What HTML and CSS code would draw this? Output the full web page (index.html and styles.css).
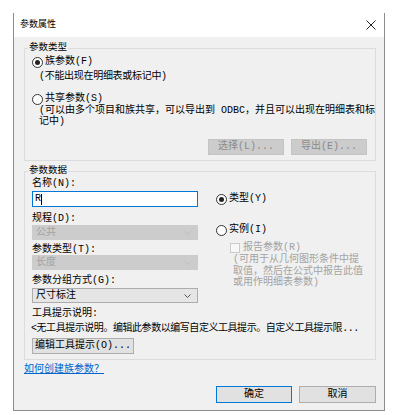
FILE: index.html
```html
<!DOCTYPE html>
<html lang="zh-CN">
<head>
<meta charset="utf-8">
<title>参数属性</title>
<link rel="stylesheet" href="styles.css">
</head>
<body>
<div class="window">
  <div class="titlebar">
    <span class="title">参数属性</span>
    <svg class="close" width="10" height="10" viewBox="0 0 10 10"><path d="M0.5 0.5L9.5 9.5M9.5 0.5L0.5 9.5" stroke="#222" stroke-width="1"/></svg>
  </div>
  <div class="body">
    <fieldset class="group g1">
      <legend>参数类型</legend>
      <div class="radio-row"><span class="radio checked"></span><span>族参数(F)</span></div>
      <div class="desc d1">(不能出现在明细表或标记中)</div>
      <div class="radio-row r2"><span class="radio"></span><span>共享参数(S)</span></div>
      <div class="desc d2"><span class="ln">(可以由多个项目和族共享，可以导出到 ODBC，并且可以出现在明细表和标</span><span class="ln">记中)</span></div>
      <div class="btn-row">
        <div class="btn disabled">选择(L)...</div>
        <div class="btn disabled">导出(E)...</div>
      </div>
    </fieldset>
    <fieldset class="group g2">
      <legend>参数数据</legend>
      <div class="cols">
        <div class="left">
          <div class="lbl">名称(N):</div>
          <div class="input">R<span class="caret"></span></div>
          <div class="lbl l2">规程(D):</div>
          <div class="select disabled"><span>公共</span><svg width="7" height="4" viewBox="0 0 7 4"><path d="M0.5 0.5L3.5 3.5L6.5 0.5" fill="none" stroke="#bdbdbd"/></svg></div>
          <div class="lbl l3">参数类型(T):</div>
          <div class="select disabled s2"><span>长度</span><svg width="7" height="4" viewBox="0 0 7 4"><path d="M0.5 0.5L3.5 3.5L6.5 0.5" fill="none" stroke="#bdbdbd"/></svg></div>
          <div class="lbl l4">参数分组方式(G):</div>
          <div class="select enabled"><span>尺寸标注</span><svg width="7" height="4" viewBox="0 0 7 4"><path d="M0.5 0.5L3.5 3.5L6.5 0.5" fill="none" stroke="#555"/></svg></div>
        </div>
        <div class="right">
          <div class="radio-row rt"><span class="radio checked"></span><span>类型(Y)</span></div>
          <div class="radio-row ri"><span class="radio"></span><span>实例(I)</span></div>
          <div class="check-row"><span class="checkbox"></span><span>报告参数(R)</span></div>
          <div class="hint"><span class="ln">(可用于从几何图形条件中提</span><span class="ln">取值，然后在公式中报告此值</span><span class="ln">或用作明细表参数)</span></div>
        </div>
      </div>
      <div class="lbl l5">工具提示说明:</div>
      <div class="lbl l6 nowrap">&lt;无工具提示说明。编辑此参数以编写自定义工具提示。自定义工具提示限...</div>
      <div class="btn tip">编辑工具提示(O)...</div>
    </fieldset>
    <a class="link" href="#">如何创建族参数？</a>
    <div class="footer">
      <div class="btn primary">确定</div>
      <div class="btn cancel">取消</div>
    </div>
  </div>
</div>
</body>
</html>
```

FILE: styles.css
```css
html, body {
  margin: 0;
  padding: 0;
  background: #ffffff;
}
body {
  font-family: "Liberation Mono", "Noto Sans CJK SC", monospace;
  font-size: 10px;
  color: #000;
}
.window {
  box-sizing: border-box;
  margin: 13px 0 0 13px;
  width: 372px;
  height: 398px;
  border: 1px solid #8c8c8c;
  border-top: none;
  display: flex;
  flex-direction: column;
}
.titlebar {
  height: 24px;
  background: #fff;
  display: flex;
  align-items: center;
  justify-content: space-between;
  padding: 0 8px 0 6px;
}
.title {
  font-size: 9px;
  line-height: 12px;
}
.close {
  display: block;
}
.body {
  flex: 1;
  background: #f0f0f0;
  padding: 4px 8px 0 10px;
  display: flex;
  flex-direction: column;
}
.group {
  margin: 0;
  border: 1px solid #dcdcdc;
  padding: 0 8px 5px 7px;
  min-width: 0;
}
.group legend {
  padding: 0 1px;
  margin-left: -4px;
  line-height: 14px;
  height: 14px;
  font-size: 9.5px;
}
.radio-row {
  display: flex;
  align-items: center;
  height: 14px;
  line-height: 14px;
}
.radio {
  box-sizing: border-box;
  width: 11px;
  height: 11px;
  border: 1px solid #333;
  border-radius: 50%;
  background: #fff;
  margin-right: 2px;
  display: flex;
  align-items: center;
  justify-content: center;
}
.radio.checked::after {
  content: "";
  width: 5px;
  height: 5px;
  border-radius: 50%;
  background: #222;
}
.desc {
  padding-left: 7px;
}
.d1 {
  margin-top: 2px;
  line-height: 12px;
  letter-spacing: -0.3px;
}
.r2 {
  margin-top: 9px;
}
.d2 {
  margin-top: -1px;
  line-height: 11px;
}
.ln {
  display: block;
  white-space: nowrap;
}
.btn-row {
  margin-top: 12px;
  display: flex;
  justify-content: flex-end;
  gap: 7px;
}
.btn {
  box-sizing: border-box;
  height: 16px;
  line-height: 14px;
  border: 1px solid #adadad;
  background: #e1e1e1;
  text-align: center;
  white-space: nowrap;
}
.btn-row .btn {
  width: 76px;
}
.btn.disabled {
  background: #cccccc;
  border-color: #c4c4c4;
  color: #8a8a8a;
}
.g2 {
  margin-top: 3px;
  padding-bottom: 5px;
}
.cols {
  display: flex;
  gap: 18px;
}
.left {
  width: 166px;
  display: flex;
  flex-direction: column;
}
.lbl {
  line-height: 11px;
  height: 11px;
}
.input {
  box-sizing: border-box;
  margin-top: 2px;
  height: 16px;
  border: 1px solid #0078d7;
  background: #fff;
  padding-left: 2px;
  line-height: 14px;
  display: flex;
  align-items: center;
}
.caret {
  display: inline-block;
  width: 1px;
  height: 11px;
  background: #000;
}
.l2 { margin-top: 6px; }
.l3 { margin-top: 4px; }
.l4 { margin-top: 5px; }
.select {
  box-sizing: border-box;
  height: 15px;
  margin-top: 1px;
  display: flex;
  align-items: center;
  justify-content: space-between;
  padding: 0 6px 0 3px;
  line-height: 13px;
}
.select.disabled {
  background: #cccccc;
  border: 1px solid #cccccc;
  color: #a3a3a3;
}
.select.s2 {
  margin-top: 0;
}
.select.enabled {
  margin-top: 2px;
  background: #e5e5e5;
  border: 1px solid #adadad;
  color: #000;
}
.select svg {
  display: block;
}
.right {
  flex: 1;
  display: flex;
  flex-direction: column;
  min-width: 0;
}
.rt { margin-top: 14px; }
.ri { margin-top: 17px; }
.check-row {
  margin-top: 5px;
  margin-left: 14px;
  display: flex;
  align-items: center;
  height: 11px;
  line-height: 11px;
  color: #a3a3a3;
}
.checkbox {
  box-sizing: border-box;
  width: 10px;
  height: 10px;
  border: 1px solid #cccccc;
  background: #f7f7f7;
  margin-right: 3px;
}
.hint {
  margin-left: 17px;
  margin-top: 1px;
  line-height: 11.5px;
  color: #a3a3a3;
}
.l5 { margin-top: 5px; }
.l6 { margin-top: 4px; margin-left: -1px; letter-spacing: -0.45px; }
.nowrap { white-space: nowrap; }
.btn.tip {
  margin-top: 4px;
  width: 102px;
  height: 16px;
}
.link {
  margin-top: 4px;
  align-self: flex-start;
  line-height: 12px;
  color: #0066cc;
  text-decoration: underline;
}
.footer {
  margin-top: 10px;
  display: flex;
  justify-content: flex-end;
  gap: 7px;
}
.footer .btn {
  height: 17px;
  line-height: 15px;
}
.btn.primary {
  width: 76px;
  border-color: #0078d7;
}
.btn.cancel {
  width: 77px;
}
```
